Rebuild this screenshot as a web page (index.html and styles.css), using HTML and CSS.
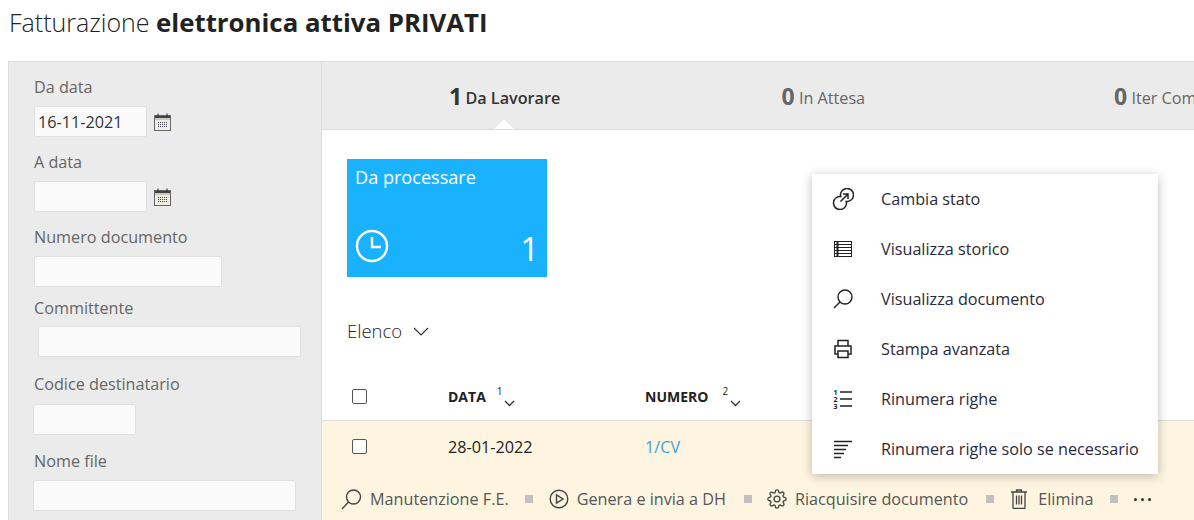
FILE: index.html
```html
<!DOCTYPE html>
<html lang="it">
<head>
  <meta charset="UTF-8" />
  <title>Fatturazione elettronica attiva PRIVATI</title>
  <link rel="stylesheet" href="styles.css">
</head>
<body>

<h1 class="title">Fatturazione <b>elettronica attiva PRIVATI</b></h1>

<div class="layout">

  <!-- Filtri -->
  <div class="sidebar">
    <div class="field first">
      <label>Da data</label>
      <div class="date-row">
        <input class="input-date" type="text" value="16-11-2021" />
        <svg class="cal" width="17" height="18" viewBox="0 0 17 18">
          <rect x="0.5" y="2.500" width="16" height="15" fill="#efece2" stroke="#666"/>
          <rect x="1" y="3" width="15" height="2" fill="#444"/>
          <rect x="1" y="5" width="15" height="2" fill="#c9c9c4"/>
          <path d="M4 .5v3M13 .5v3" stroke="#222"/>
          <path d="M4 9.500h9M4 11.500h9M4 13.500h9" stroke="#445" stroke-dasharray="1 1"/>
        </svg>
      </div>
    </div>
    <div class="field second">
      <label>A data</label>
      <div class="date-row">
        <input class="input-date" type="text" />
        <svg class="cal" width="17" height="18" viewBox="0 0 17 18">
          <rect x="0.5" y="2.500" width="16" height="15" fill="#efece2" stroke="#666"/>
          <rect x="1" y="3" width="15" height="2" fill="#444"/>
          <rect x="1" y="5" width="15" height="2" fill="#c9c9c4"/>
          <path d="M4 .5v3M13 .5v3" stroke="#222"/>
          <path d="M4 9.500h9M4 11.500h9M4 13.500h9" stroke="#445" stroke-dasharray="1 1"/>
        </svg>
      </div>
    </div>
    <div class="field second">
      <label>Numero documento</label>
      <input class="input-num" type="text" />
    </div>
    <div class="field committente">
      <label>Committente</label>
      <input class="input-comm" type="text" />
    </div>
    <div class="field codice">
      <label>Codice destinatario</label>
      <input class="input-cod" type="text" />
    </div>
    <div class="field nome">
      <label>Nome file</label>
      <input class="input-nome" type="text" />
    </div>
  </div>

  <div class="main">

    <!-- Tabs -->
    <div class="tabs">
      <div class="tab active"><b>1</b> <span>Da Lavorare</span></div>
      <div class="tab"><b>0</b> <span>In Attesa</span></div>
      <div class="tab"><b>0</b> <span>Iter Completati</span></div>
    </div>

    <div class="tile">
      <div class="tile-title">Da processare</div>
      <div class="tile-bottom">
        <svg width="34" height="34" viewBox="0 0 34 34" fill="none" stroke="#fff" stroke-width="2.4">
          <circle cx="17" cy="17" r="15"/>
          <path d="M17 8v10h9"/>
        </svg>
        <span class="tile-count">1</span>
      </div>
    </div>

    <div class="list-title">
      Elenco
      <svg width="16" height="9" viewBox="0 0 16 9" fill="none" stroke="#333" stroke-width="1.2"><path d="M1 1l7 7 7-7"/></svg>
    </div>

    <!-- Tabella -->
    <div class="grid-row grid-head">
      <span class="check"></span>
      <span class="col-data">DATA <sup>1</sup><svg width="11" height="7" viewBox="0 0 11 7" fill="none" stroke="#333" stroke-width="1.3"><path d="M1 1l4.500 4.500L10 1"/></svg></span>
      <span class="col-num">NUMERO <sup>2</sup><svg width="11" height="7" viewBox="0 0 11 7" fill="none" stroke="#333" stroke-width="1.3"><path d="M1 1l4.500 4.500L10 1"/></svg></span>
    </div>
    <div class="row-wrap">
      <div class="grid-row grid-body">
        <span class="check"></span>
        <span class="col-data">28-01-2022</span>
        <span class="col-num link">1/CV</span>
      </div>
      <div class="actions">
        <svg width="21" height="21" viewBox="0 0 21 21" fill="none" stroke="#444" stroke-width="1.4"><circle cx="12.500" cy="8" r="7"/><path d="M7.500 13L1 20"/></svg>
        <span class="act">Manutenzione F.E.</span>
        <i class="sep"></i>
        <svg width="20" height="20" viewBox="0 0 20 20" fill="none" stroke="#444" stroke-width="1.4"><circle cx="10" cy="10" r="8.800"/><path d="M7.500 5.800v8.400L14 10z"/></svg>
        <span class="act">Genera e invia a DH</span>
        <i class="sep sep-b"></i>
        <svg width="20" height="20" viewBox="0 0 24 24" fill="none" stroke="#444" stroke-width="1.6"><circle cx="12" cy="12" r="3.500"/><path d="M19.400 15a1.650 1.650 0 0 0 .33 1.820l.06.06a2 2 0 0 1 0 2.830 2 2 0 0 1-2.830 0l-.06-.06a1.650 1.650 0 0 0-1.820-.33 1.650 1.650 0 0 0-1 1.510V21a2 2 0 0 1-2 2 2 2 0 0 1-2-2v-.09A1.650 1.650 0 0 0 9 19.400a1.650 1.650 0 0 0-1.820.33l-.06.06a2 2 0 0 1-2.830 0 2 2 0 0 1 0-2.830l.06-.06a1.650 1.650 0 0 0 .33-1.820 1.650 1.650 0 0 0-1.510-1H3a2 2 0 0 1-2-2 2 2 0 0 1 2-2h.09A1.650 1.650 0 0 0 4.600 9a1.650 1.650 0 0 0-.33-1.820l-.06-.06a2 2 0 0 1 0-2.830 2 2 0 0 1 2.830 0l.06.06a1.650 1.650 0 0 0 1.820.33H9a1.650 1.650 0 0 0 1-1.510V3a2 2 0 0 1 2-2 2 2 0 0 1 2 2v.09a1.650 1.650 0 0 0 1 1.510 1.650 1.650 0 0 0 1.820-.33l.06-.06a2 2 0 0 1 2.830 0 2 2 0 0 1 0 2.830l-.06.06a1.650 1.650 0 0 0-.33 1.820V9a1.650 1.650 0 0 0 1.510 1H21a2 2 0 0 1 2 2 2 2 0 0 1-2 2h-.09a1.650 1.650 0 0 0-1.510 1z"/></svg>
        <span class="act">Riacquisire documento</span>
        <i class="sep sep-c"></i>
        <svg class="trash" width="16" height="20" viewBox="0 0 16 20" fill="none" stroke="#444" stroke-width="1.300"><path d="M0 3h16M5.500 3V1h5v2M2 3v15.500a1 1 0 0 0 1 1h10a1 1 0 0 0 1-1V3M5.500 6.500v9M8 6.500v9M10.500 6.500v9"/></svg>
        <span class="act act-del">Elimina</span>
        <i class="sep sep-d"></i>
        <span class="dots"><i></i><i></i><i></i></span>
      </div>
    </div>

    <!-- Menu azioni -->
    <div class="menu">
      <div class="menu-item">
        <svg width="22" height="22" viewBox="0 0 22 22" fill="none" stroke="#222" stroke-width="1.500"><path d="M8.700 8.500A6.500 6.500 0 1 1 13.500 13.300"/><path d="M14.300 13.500A6.500 6.500 0 1 1 9.500 8.700"/><path d="M8.500 13.500l7-7M11 6h5v5"/></svg>
        Cambia stato
      </div>
      <div class="menu-item">
        <svg width="22" height="22" viewBox="0 0 22 22" fill="none" stroke="#222"><rect x="2.500" y="3.500" width="17" height="15"/><path d="M2.500 6.500h17M2.500 9.500h17M2.500 12.500h17M2.500 15.500h17" /><path d="M5.500 3.500v15" stroke-width="2"/></svg>
        Visualizza storico
      </div>
      <div class="menu-item">
        <svg width="22" height="22" viewBox="0 0 22 22" fill="none" stroke="#222" stroke-width="1.400"><circle cx="13" cy="9" r="7"/><path d="M8 14l-6 6"/></svg>
        Visualizza documento
      </div>
      <div class="menu-item">
        <svg width="22" height="22" viewBox="0 0 22 22" fill="none" stroke="#222" stroke-width="1.500"><path d="M6 8V2.500h10V8M6 16H3V8h16v8h-3"/><rect x="6" y="13" width="10" height="6.500"/></svg>
        Stampa avanzata
      </div>
      <div class="menu-item">
        <svg width="22" height="22" viewBox="0 0 22 22" fill="none" stroke="#222" stroke-width="1.400"><path d="M8 4h12M8 11h12M8 18h12"/><text x="1.500" y="7" class="menu-num">1</text><text x="1.500" y="13.500" class="menu-num">2</text><text x="1.500" y="20.500" class="menu-num">3</text></svg>
        Rinumera righe
      </div>
      <div class="menu-item">
        <svg width="22" height="22" viewBox="0 0 22 22" fill="none" stroke="#222" stroke-width="1.400"><path d="M2 3.500h18M2 7.500h14M2 11.500h12M2 15.500h10M2 19.500h7"/></svg>
        Rinumera righe solo se necessario
      </div>
    </div>

  </div>
</div>

</body>
</html>
```

FILE: styles.css
```css
html, body {
  margin: 0;
  height: 520px;
  overflow: hidden;
  background: #fff;
}

body {
  font-family: "Open Sans", "Noto Sans", sans-serif;
  color: #222;
  padding-left: 8px;
}

.title {
  font-size: 25px;
  font-weight: 300;
  line-height: 34px;
  height: 61px;
  margin: 0 0 0 1px;
  padding-top: 5px;
  box-sizing: border-box;
  color: #222;
}

.title b {
  font-size: 25.800px;
  font-weight: 700;
}

.layout {
  display: flex;
  height: 459px;
  width: 1400px;
}

.sidebar {
  width: 314px;
  box-sizing: border-box;
  flex: none;
  background: #ebebeb;
  border-left: 1px solid #ddd;
  border-top: 1px solid #ddd;
  border-right: 1px solid #ddd;
  padding-left: 24px;
}

.field label {
  display: block;
  font-size: 16.200px;
  line-height: 20px;
  color: #666;
}

.field input {
  display: block;
  box-sizing: border-box;
  height: 31px;
  background: #fafafa;
  border: 1px solid #e0e0e0;
  border-radius: 2px;
  padding: 0 3px;
  font-family: inherit;
  font-size: 16.200px;
  color: #333;
  outline: none;
}

.first { padding-top: 15px; }
.first label, .second label { margin-left: 1px; margin-bottom: 9px; }
.second { padding-top: 15px; }

.date-row {
  display: flex;
  align-items: center;
  gap: 7px;
}

.input-date { width: 113px; margin-left: 1px; }
.input-num { width: 188px; margin-left: 1px; }

.committente { padding-top: 11px; }
.committente label { margin: 0 0 8px 1px; }
.input-comm { width: 263px; margin-left: 5px; }

.codice { padding-top: 17px; }
.codice label { margin: 0 0 10px 1px; }
.input-cod { width: 103px; }

.nome { padding-top: 16px; }
.nome label { margin: 0 0 9px 1px; }
.input-nome { width: 263px; }

.main {
  position: relative;
  flex: 1;
  min-width: 0;
}

.tabs {
  display: flex;
  height: 69px;
  box-sizing: border-box;
  background: #ebebeb;
  border-top: 1px solid #ddd;
  border-bottom: 1px solid #ddd;
  padding-left: 127px;
}

.tab {
  position: relative;
  flex: none;
  width: 332.500px;
  line-height: 68px;
  font-size: 16.200px;
  color: #666;
  white-space: nowrap;
}

.tab b {
  font-size: 23px;
  font-weight: 700;
  vertical-align: -1px;
}

.tab.active { color: #333; }
.tab.active span { font-weight: 600; margin-left: -1px; }

/* freccia sotto il tab attivo */
.tab.active::after {
  content: "";
  position: absolute;
  left: 46px;
  bottom: -9px;
  width: 17px;
  height: 17px;
  background: #fff;
  border-top: 1px solid #ddd;
  border-left: 1px solid #ddd;
  transform: rotate(45deg) scale(.9);
  clip-path: polygon(0 0, 100% 0, 0 100%);
}

.tile {
  width: 200px;
  height: 118px;
  margin: 29px 0 0 25px;
  background: #1ab2ff;
  color: #fff;
  box-sizing: border-box;
  padding: 5px 8px 0;
}

.tile-title {
  font-size: 18.100px;
  line-height: 26px;
}

.tile-bottom {
  display: flex;
  justify-content: space-between;
  align-items: flex-end;
  margin-top: 36px;
}

.tile-count {
  font-size: 33px;
  line-height: 46px;
  margin-bottom: -9px;
}

.list-title {
  display: flex;
  align-items: center;
  gap: 11px;
  font-size: 18.500px;
  font-weight: 300;
  line-height: 26px;
  margin: 41px 0 0 25px;
  color: #222;
}

.grid-row {
  display: flex;
  align-items: center;
  font-size: 16.200px;
}

.check {
  width: 13px;
  height: 13px;
  border: 1px solid #555;
  border-radius: 2px;
  background: #fff;
  margin-left: 30px;
  flex: none;
}

.col-data { margin-left: 81px; width: 197px; flex: none; }
.col-num { flex: none; }

.grid-head {
  height: 40px;
  margin-top: 32px;
  padding-bottom: 4px;
  border-bottom: 1px solid #ddd;
  font-size: 14px;
  font-weight: 700;
  color: #222;
}

.grid-head .col-data,
.grid-head .col-num {
  display: flex;
  align-items: center;
}

.grid-head sup {
  font-size: 10px;
  font-weight: 400;
  line-height: 1;
  margin: -10px 0 0 11px;
}

.grid-head svg {
  margin: 14px 0 0 1px;
}

.grid-head .col-num sup { margin-left: 14px; }
.grid-head .col-num svg { margin-left: 2px; }

.row-wrap {
  background: #fdf5e0;
  height: 200px;
}

.grid-body {
  height: 50px;
  padding-bottom: 2px;
  color: #222;
}

.grid-body .col-data,
.grid-body .col-num {
  padding-top: 2px;
}

.link { color: #3f9fd8; }

.actions {
  display: flex;
  align-items: center;
  height: 52px;
  padding-left: 19px;
  font-size: 16.200px;
  color: #555;
  white-space: nowrap;
}

.act { margin-left: 8px; }

.sep {
  width: 8px;
  height: 8px;
  background: #c0c0c0;
  margin: 0 16px;
  flex: none;
}

.sep-b { margin: 0 15px 0 18px; }
.sep-c { margin: 0 17px 0 18px; }
.sep-d { margin: 0 16px 0 17px; }

.act-del { margin-left: 11px; }

.dots {
  display: flex;
  gap: 4px;
}

.dots i {
  width: 3px;
  height: 3px;
  border-radius: 50%;
  background: #333;
}

.menu {
  position: absolute;
  left: 490px;
  top: 113px;
  width: 346px;
  background: #fff;
  box-shadow: 0 2px 10px rgba(0,0,0,0.25);
  z-index: 5;
}

.menu-item {
  display: flex;
  align-items: center;
  height: 50px;
  padding-left: 20px;
  gap: 27px;
  font-size: 16.200px;
  line-height: 48px;
  color: #2a2a3a;
  white-space: nowrap;
}

.menu-num {
  font-size: 7px;
  font-weight: 700;
  fill: #222;
  stroke: none;
}
```
